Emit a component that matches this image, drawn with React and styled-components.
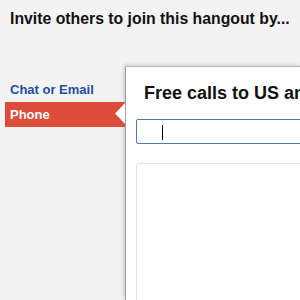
import styled, { createGlobalStyle } from "styled-components";

const GlobalStyle = createGlobalStyle`
  html, body {
    margin: 0;
    padding: 0;
    background: #f3f3f3;
    font-family: "Liberation Sans", Arial, sans-serif;
  }
`;

const App = () => {
  return (
    <Page>
      <GlobalStyle />
      <Title>Invite others to join this hangout by...</Title>
      <Body>
        <Sidebar>
          <NavItem>Chat or Email</NavItem>
          <NavItem active>
            Phone
            <Notch viewBox="0 0 10 21" aria-hidden="true">
              <polygon points="10,0 0,10.5 10,21" fill="#fff" />
            </Notch>
          </NavItem>
        </Sidebar>
        <Panel>
          <PanelTitle>Free calls to US and Canada</PanelTitle>
          <FakeInput>
            <Caret />
          </FakeInput>
          <ResultBox />
        </Panel>
      </Body>
    </Page>
  );
};

const Page = styled.div`
  height: 300px;
  overflow: hidden;
  display: flex;
  flex-direction: column;
`;

const Title = styled.h1`
  flex-shrink: 0;
  margin: 0;
  padding: 9px 0 0 10px;
  height: 66px;
  box-sizing: border-box;
  font-size: 15.8px;
  line-height: 19px;
  font-weight: bold;
  color: #111;
  white-space: nowrap;
`;

const Body = styled.div`
  display: flex;
  flex: 1;
  min-height: 0;
`;

const Sidebar = styled.ul`
  list-style: none;
  margin: 0;
  padding: 11px 0 0 5px;
  width: 125px;
  box-sizing: border-box;
  flex-shrink: 0;
`;

const NavItem = styled.li`
  position: relative;
  height: 25px;
  line-height: 25px;
  padding-left: 5px;
  font-size: 13px;
  font-weight: bold;
  color: ${(p) => (p.active ? "#fff" : "#1d4ea0")};
  background: ${(p) => (p.active ? "#dd4b39" : "transparent")};
  cursor: pointer;
`;

const Notch = styled.svg`
  position: absolute;
  right: 0;
  top: 1px;
  width: 10px;
  height: 21px;
`;

const Panel = styled.div`
  flex: 1;
  background: #fff;
  border-top: 1px solid #b5b5b5;
  border-left: 1px solid #a0a0a0;
  box-shadow: -1px -1px 4px rgba(0, 0, 0, 0.18);
  padding: 16px 0 0 10px;
  overflow: hidden;
`;

const PanelTitle = styled.h2`
  margin: 0 0 15px 8px;
  font-size: 18px;
  line-height: 21px;
  font-weight: bold;
  color: #111;
  white-space: nowrap;
`;

const FakeInput = styled.div`
  width: 300px;
  height: 25px;
  box-sizing: border-box;
  border: 1px solid #4d79b8;
  border-radius: 2px;
  padding: 5px 0 0 25px;
  margin-bottom: 19px;
`;

const Caret = styled.span`
  display: block;
  width: 1px;
  height: 15px;
  background: #000;
`;

const ResultBox = styled.div`
  width: 300px;
  height: 300px;
  box-sizing: border-box;
  border: 1px solid #e3e3e3;
  border-radius: 3px;
`;

export default App;
